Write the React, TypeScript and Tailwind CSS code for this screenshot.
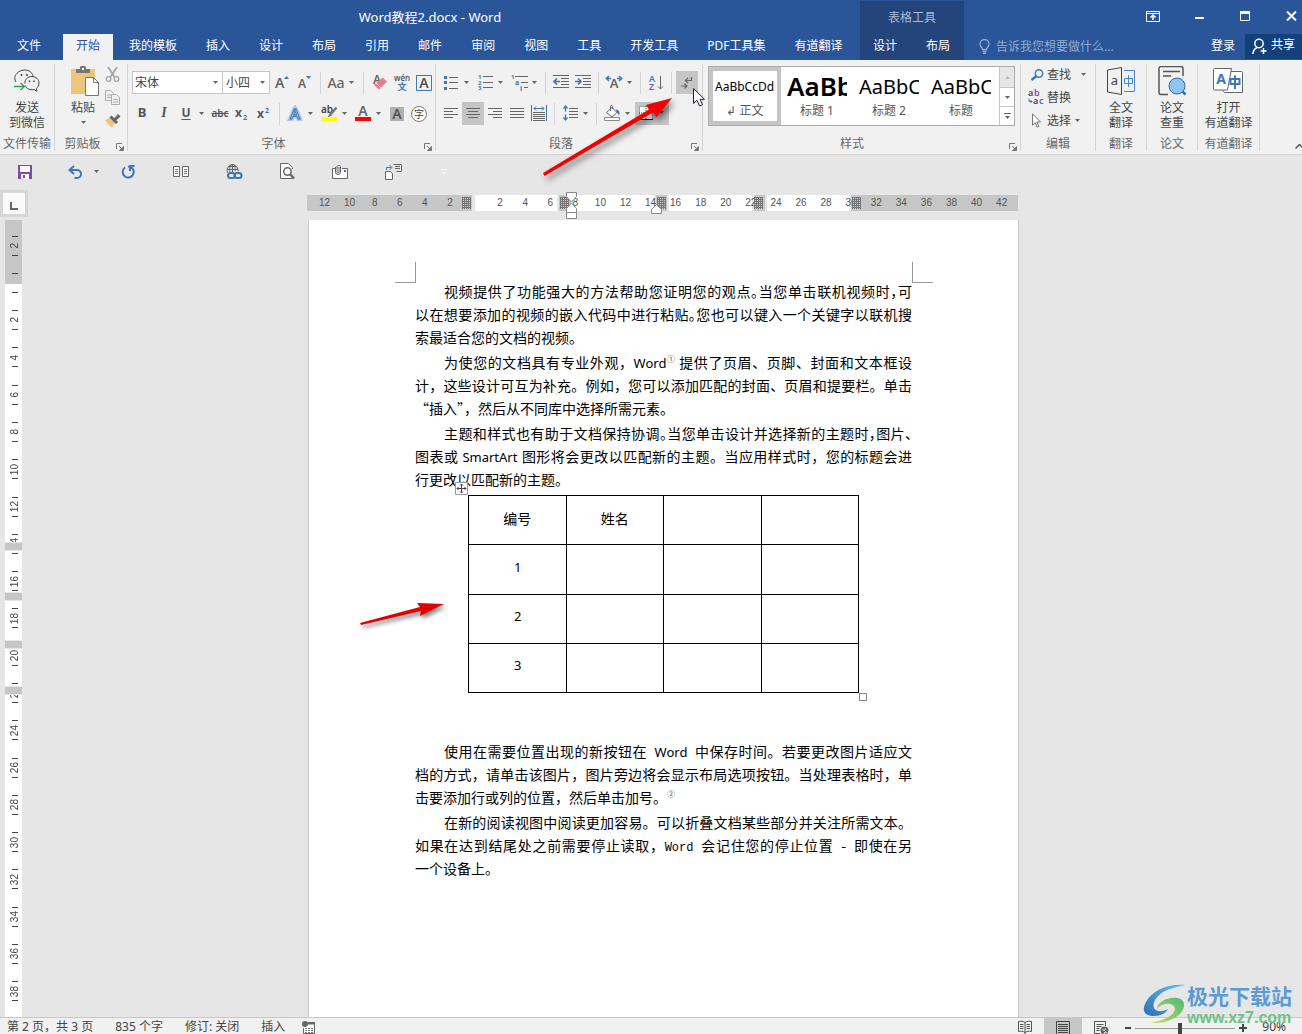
import React from "react";

type Kids = { children?: React.ReactNode };

function Svg({ w, h, className = "", children }: { w: number; h: number; className?: string } & Kids) {
  return (
    <svg width={w} height={h} viewBox={`0 0 ${w} ${h}`} className={`block shrink-0 ${className}`} fill="none" aria-hidden="true">
      {children}
    </svg>
  );
}

function Btn({ label, className = "", children }: { label: string; className?: string } & Kids) {
  return (
    <button type="button" aria-label={label} className={`flex h-[23px] w-[22px] shrink-0 items-center justify-center ${className}`}>
      {children}
    </button>
  );
}

function CaretShape() {
  return (
    <Svg w={5} h={3}>
      <path d="M0 0h5L2.5 3z" fill="#666" />
    </Svg>
  );
}

function Caret({ label }: { label: string }) {
  return (
    <button type="button" aria-label={label} className="flex h-[23px] w-[12px] shrink-0 items-center pl-[2px]">
      <CaretShape />
    </button>
  );
}

function Sep({ tight = false }: { tight?: boolean }) {
  return <span className={`mr-1 h-[22px] w-px shrink-0 bg-[#d4d4d4] ${tight ? "ml-[3px]" : "ml-1"}`} />;
}

function Group({ label, className, launcher = false, children }: { label: string; className: string; launcher?: boolean } & Kids) {
  return (
    <section aria-label={label} className={`flex h-[87px] shrink-0 flex-col border-r border-[#d4d4d4] ${className}`}>
      <div className="flex-1">{children}</div>
      <div className="relative h-[15px] text-center leading-[15px] whitespace-nowrap text-[#666]">
        {label}
        {launcher && (
          <button type="button" aria-label={`${label}设置`} className="absolute right-[3px] bottom-0">
            <Svg w={8} h={8}>
              <path d="M.5 6V.5H6" stroke="#777" />
              <path d="M3 3l3 3M7.5 3.5v4h-4z" stroke="#777" fill="#777" />
            </Svg>
          </button>
        )}
      </div>
    </section>
  );
}

function BigButton({ lines, icon, caret = false }: { lines: string[]; icon: React.ReactNode; caret?: boolean }) {
  return (
    <button type="button" className="flex flex-col items-center leading-[15px] whitespace-nowrap text-[#444]">
      <span className="mb-[2px] flex h-[34px] items-center justify-center">{icon}</span>
      {lines.map((l) => (
        <span key={l}>{l}</span>
      ))}
      {caret && (
        <span className="flex h-[15px] items-center">
          <CaretShape />
        </span>
      )}
    </button>
  );
}

function Header() {
  const tabs = ["我的模板", "插入", "设计", "布局", "引用", "邮件", "审阅", "视图", "工具", "开发工具", "PDF工具集", "有道翻译"];
  return (
    <header className="flex h-[60px] bg-[#2a5699] text-white">
      <div className="flex w-[860px] shrink-0 flex-col">
        <h1 className="h-[34px] text-center text-[13px] leading-[35px]">Word教程2.docx - Word</h1>
        <nav className="flex h-[26px] gap-[3px] pl-1 whitespace-nowrap">
          <button type="button" className="mr-[6px] px-[13px] pb-[3px]">文件</button>
          <button type="button" className="bg-[#f1f1f1] px-[13px] pb-[3px] text-[#2a5699]">开始</button>
          {tabs.map((t) => (
            <button type="button" key={t} className="shrink-0 px-[13px] pb-[3px]">{t}</button>
          ))}
        </nav>
      </div>
      <div className="mt-px w-[104px] shrink-0 bg-[#24457b]">
        <div className="h-[33px] text-center leading-[33px] text-[#a9b9d3]">表格工具</div>
        <div className="flex h-[26px] gap-[3px]">
          <button type="button" className="px-[13px] pb-[3px]">设计</button>
          <button type="button" className="px-[13px] pb-[3px]">布局</button>
        </div>
      </div>
      <div className="flex flex-1 flex-col">
        <div className="flex h-[34px] items-center justify-end gap-[35px] pr-[5px] pb-[2px]">
          <button type="button" aria-label="功能区显示选项">
            <Svg w={14} h={11}>
              <path d="M.5.5h13v10H.5zM.5 2.5h13" stroke="#fff" />
              <path d="M7 9V4.500M4.500 6.500L7 4l2.500 2.500" stroke="#fff" strokeWidth="1.500" />
            </Svg>
          </button>
          <button type="button" aria-label="最小化">
            <Svg w={10} h={10}>
              <path d="M0 7h9" stroke="#fff" strokeWidth="2" />
            </Svg>
          </button>
          <button type="button" aria-label="最大化">
            <Svg w={11} h={10}>
              <path d="M.5.5h9v9h-9z" stroke="#fff" />
              <path d="M0 1.500h10" stroke="#fff" strokeWidth="3" />
            </Svg>
          </button>
          <button type="button" aria-label="关闭">
            <Svg w={11} h={10}>
              <path d="M1 .5l9 9M10 .5l-9 9" stroke="#fff" strokeWidth="2" />
            </Svg>
          </button>
        </div>
        <div className="flex h-[25px] items-stretch">
          <label className="flex flex-1 items-center gap-[6px] pl-[15px]">
            <Svg w={11} h={15}>
              <path d="M3.500 10.500C3.500 8.500 1 8 1 5a4.500 4.500 0 019 0c0 3-2.500 3.500-2.500 5.500zM3.500 12.500h4M4 14.500h3" stroke="#94a9cb" strokeWidth="1.300" />
            </Svg>
            <input type="text" aria-label="操作说明搜索" placeholder="告诉我您想要做什么..." className="w-[150px] bg-transparent outline-none placeholder:text-[#94a9cb]" />
          </label>
          <button type="button" className="mr-[10px] pb-[2px]">登录</button>
          <button type="button" className="flex w-[57px] items-center gap-1 bg-[#133f7a] pl-[7px] whitespace-nowrap">
            <Svg w={15} h={17}>
              <circle cx="7" cy="5.500" r="4.200" stroke="#fff" strokeWidth="1.500" />
              <path d="M.8 16c.4-3.500 2-5.300 4.200-6.200M11.500 10v6M8.500 13h6" stroke="#fff" strokeWidth="1.500" />
            </Svg>
            <span className="pb-1">共享</span>
          </button>
        </div>
      </div>
    </header>
  );
}

function FontGroup() {
  return (
    <Group label="字体" launcher className="w-[308px] pl-1 [&>div:last-child]:pr-5">
      <div className="mt-[7px] flex h-[23px] items-center">
        <label className="relative">
          <span className="sr-only">字体</span>
          <select className="block h-[23px] w-[91px] appearance-none border border-[#c6c6c6] bg-white pl-[2px] leading-[21px] text-[#444]">
            <option>宋体</option>
          </select>
          <span className="pointer-events-none absolute top-[10px] right-[5px]"><CaretShape /></span>
        </label>
        <label className="relative mr-px">
          <span className="sr-only">字号</span>
          <select className="block h-[23px] w-[47px] appearance-none border border-l-0 border-[#c6c6c6] bg-white pl-[3px] leading-[21px] text-[#444]">
            <option>小四</option>
          </select>
          <span className="pointer-events-none absolute top-[10px] right-[5px]"><CaretShape /></span>
        </label>
        <Btn label="增大字号">
          <Svg w={14} h={16}>
            <text x="0" y="13" fontSize="14" fontWeight="600" fill="#666">A</text>
            <path d="M9 4l2.500-3L14 4z" fill="#3d77b5" />
          </Svg>
        </Btn>
        <Btn label="减小字号" className="ml-[1px]">
          <Svg w={14} h={16}>
            <text x="0" y="13" fontSize="12" fontWeight="600" fill="#666">A</text>
            <path d="M8 1h5L10.500 4z" fill="#3d77b5" />
          </Svg>
        </Btn>
        <Sep />
        <Btn label="更改大小写" className="text-[14px] font-medium text-[#666]">Aa</Btn>
        <Caret label="更改大小写选项" />
        <Sep />
        <Btn label="清除格式" className="ml-[1px]">
          <Svg w={17} h={17}>
            <text x="1" y="10" fontSize="12" fill="#666" fontWeight="600">A</text>
            <path d="M2 11L10.500 3.500 15 7.500 7 15.500z" fill="#e87b8b" />
            <path d="M4 9l5 5" stroke="#f1f1f1" />
          </Svg>
        </Btn>
        <Btn label="拼音指南">
          <Svg w={18} h={19}>
            <text x="9" y="8" fontSize="8" fill="#444" textAnchor="middle" fontWeight="500">wén</text>
            <text x="9" y="17" fontSize="9" fontWeight="700" fill="#3d77b5" textAnchor="middle">文</text>
          </Svg>
        </Btn>
        <Btn label="字符边框">
          <Svg w={16} h={16}>
            <path d="M.5.5h15v15H.5z" stroke="#3d77b5" />
            <text x="8" y="13" fontSize="14" fontWeight="600" fill="#555" textAnchor="middle">A</text>
          </Svg>
        </Btn>
      </div>
      <div className="mt-2 -ml-px flex h-[23px] items-center text-[#555]">
        <Btn label="加粗" className="pb-[2px] text-[13px] font-bold">B</Btn>
        <Btn label="倾斜" className="pb-[2px] font-['Liberation_Serif'] text-[14px] font-bold italic">I</Btn>
        <Btn label="下划线" className="pb-[2px] text-[12px] font-bold underline underline-offset-2">U</Btn>
        <Caret label="下划线选项" />
        <Btn label="删除线" className="pb-[1px] text-[10px] font-semibold line-through">abc</Btn>
        <Btn label="下标">
          <Svg w={14} h={14}>
            <text x="0" y="10" fontSize="12" fontWeight="700" fill="#555">x</text>
            <text x="8" y="13" fontSize="7" fontWeight="700" fill="#3d77b5">2</text>
          </Svg>
        </Btn>
        <Btn label="上标">
          <Svg w={14} h={14}>
            <text x="0" y="11" fontSize="12" fontWeight="700" fill="#555">x</text>
            <text x="8" y="6" fontSize="7" fontWeight="700" fill="#3d77b5">2</text>
          </Svg>
        </Btn>
        <Sep />
        <Btn label="文本效果">
          <Svg w={16} h={17}>
            <text x="8" y="14" fontSize="15" fontWeight="500" fill="#fff" stroke="#a9c9ea" strokeWidth="4" textAnchor="middle">A</text>
            <text x="8" y="14" fontSize="15" fontWeight="500" fill="#fff" stroke="#3d77b5" strokeWidth="1" textAnchor="middle">A</text>
          </Svg>
        </Btn>
        <Caret label="文本效果选项" />
        <Btn label="突出显示">
          <Svg w={17} h={17}>
            <text x="0" y="8" fontSize="10" fontWeight="600" fill="#444">ab</text>
            <path d="M15.500 2.500L9 10" stroke="#777" strokeWidth="2.500" />
            <path d="M8.500 8.500l2.500 2-4.500 2z" fill="#777" />
            <path d="M0 12h16v4H0z" fill="#ff0" />
          </Svg>
        </Btn>
        <Caret label="突出显示颜色" />
        <Btn label="字体颜色">
          <Svg w={16} h={17}>
            <text x="8" y="11" fontSize="14" fontWeight="600" fill="#666" textAnchor="middle">A</text>
            <path d="M0 12h16v4H0z" fill="#f00" />
          </Svg>
        </Btn>
        <Caret label="字体颜色选项" />
        <Btn label="字符底纹">
          <Svg w={14} h={14}>
            <path d="M0 0h14v14H0z" fill="#b1b1b1" />
            <text x="7" y="12" fontSize="14" fontWeight="600" fill="#555" textAnchor="middle">A</text>
          </Svg>
        </Btn>
        <Btn label="带圈字符">
          <Svg w={16} h={16}>
            <circle cx="8" cy="8" r="7.500" fill="#fff" stroke="#777" />
            <text x="8" y="11.500" fontSize="10" fill="#444" textAnchor="middle">字</text>
          </Svg>
        </Btn>
      </div>
    </Group>
  );
}

function AlignIcon({ d }: { d: string }) {
  return (
    <Svg w={14} h={12}>
      <path d={d} stroke="#666" />
    </Svg>
  );
}

function ParagraphGroup() {
  return (
    <Group label="段落" launcher className="w-[267px] pl-1 [&>div:last-child]:pr-5">
      <div className="mt-[7px] flex h-[23px] items-center">
        <Btn label="项目符号">
          <Svg w={14} h={16}>
            <path d="M5 2.500h9M5 7.500h9M5 13.500h9" stroke="#666" />
            <path d="M0 1h3v3H0zM0 6h3v3H0zM0 12h3v3H0z" fill="#3d77b5" />
          </Svg>
        </Btn>
        <Caret label="项目符号选项" />
        <Btn label="编号">
          <Svg w={15} h={17}>
            <path d="M5 2.500h10M5 8.500h10M5 13.500h10" stroke="#666" />
            <text x="0" y="5" fontSize="6" fontWeight="700" fill="#3d77b5">1</text>
            <text x="0" y="10.500" fontSize="6" fontWeight="700" fill="#3d77b5">2</text>
            <text x="0" y="16" fontSize="6" fontWeight="700" fill="#3d77b5">3</text>
          </Svg>
        </Btn>
        <Caret label="编号选项" />
        <Btn label="多级列表">
          <Svg w={17} h={17}>
            <path d="M4 2.500h13M10 8.500h7M13 13.500h4" stroke="#666" />
            <text x="0" y="5" fontSize="6" fontWeight="700" fill="#3d77b5">1</text>
            <text x="4" y="10.500" fontSize="7" fontWeight="700" fill="#3d77b5">a</text>
            <text x="9" y="16.500" fontSize="7" fontWeight="700" fill="#3d77b5">i</text>
          </Svg>
        </Btn>
        <Caret label="多级列表选项" />
        <Sep tight />
        <Btn label="减少缩进">
          <Svg w={16} h={15}>
            <path d="M0 .5h16M8 3.500h8M8 6.500h8M8 9.500h8M0 12.500h16" stroke="#666" />
            <path d="M7 6.500H1M4 3.500L1 6.500l3 3" stroke="#3d77b5" strokeWidth="1.700" />
          </Svg>
        </Btn>
        <Btn label="增加缩进">
          <Svg w={16} h={15}>
            <path d="M0 .5h16M8 3.500h8M8 6.500h8M8 9.500h8M0 12.500h16" stroke="#666" />
            <path d="M0 6.500h6M3 3.500l3 3-3 3" stroke="#3d77b5" strokeWidth="1.700" />
          </Svg>
        </Btn>
        <Sep />
        <Btn label="中文版式">
          <Svg w={18} h={15}>
            <text x="9" y="13" fontSize="13" fontWeight="600" fill="#666" textAnchor="middle">A</text>
            <path d="M6 3.500H1.500M4 1L1.300 3.500 4 6M12 3.500h4.500M14 1l2.700 2.500L14 6" stroke="#3d77b5" strokeWidth="1.500" />
          </Svg>
        </Btn>
        <Caret label="中文版式选项" />
        <Sep tight />
        <Btn label="排序">
          <Svg w={15} h={18}>
            <text x="0" y="8" fontSize="9" fontWeight="600" fill="#3d77b5">A</text>
            <text x="0" y="16" fontSize="9" fontWeight="600" fill="#8a4aa8">Z</text>
            <path d="M11.500 2v13M9 12.500l2.500 2.500 2.500-2.500" stroke="#666" />
          </Svg>
        </Btn>
        <Sep />
        <Btn label="显示编辑标记" className="bg-[#c5c5c5]">
          <Svg w={12} h={14}>
            <path d="M10.500 1v3.500H5M7 2L4.500 4.500 7 7" stroke="#666" strokeWidth="1.200" />
            <path d="M0 10h5.500M3.500 7.500L6 10l-2.500 2.500" stroke="#666" strokeWidth="1.200" />
          </Svg>
        </Btn>
      </div>
      <div className="mt-2 flex h-[23px] items-center">
        <Btn label="左对齐"><AlignIcon d="M0 .5h14M0 3.500h9M0 6.500h14M0 9.500h9" /></Btn>
        <Btn label="居中" className="bg-[#c5c5c5]"><AlignIcon d="M0 .5h14M2 3.500h10M0 6.500h14M2 9.500h10" /></Btn>
        <Btn label="右对齐"><AlignIcon d="M0 .5h14M5 3.500h9M0 6.500h14M5 9.500h9" /></Btn>
        <Btn label="两端对齐"><AlignIcon d="M0 .5h14M0 3.500h14M0 6.500h14M0 9.500h14" /></Btn>
        <Btn label="分散对齐">
          <Svg w={16} h={18}>
            <path d="M.5 0v16M15.500 0v16M3 3.500h10M5 1.500L3 3.500l2 2M11 1.500l2 2-2 2" stroke="#3d77b5" />
            <path d="M2 7.500h12M2 9.500h12M2 11.500h12M2 13.500h12M2 15.500h12" stroke="#666" />
          </Svg>
        </Btn>
        <Sep />
        <Btn label="行距">
          <Svg w={15} h={18}>
            <path d="M2.500 1v5.500M.5 3.500l2-2.500 2 2.500M2.500 9.500V15M.5 12.500l2 2.500 2-2.500" stroke="#3d77b5" strokeWidth="1.300" />
            <path d="M6 3.500h9M6 6.500h9M6 9.500h9M6 12.500h9" stroke="#666" />
          </Svg>
        </Btn>
        <Caret label="行距选项" />
        <Sep tight />
        <Btn label="底纹">
          <Svg w={17} h={17}>
            <path d="M2.500 7.500L8 2.500l5 5-5 4.500z" fill="#fff" stroke="#666" />
            <path d="M6.500 6V1.500a1 1 0 012 0V4" stroke="#666" />
            <path d="M12 4.500c3 .5 4.500 2.500 3 6.500-.5-2-1-3-2.500-3.500z" fill="#3d77b5" />
            <path d="M.5 12.500h15v3H.5z" fill="#fff" stroke="#888" />
          </Svg>
        </Btn>
        <Caret label="底纹颜色" />
        <button type="button" aria-label="边框" className="flex h-[23px] w-[34px] items-center gap-[6px] bg-[#c5c5c5] pb-[2px] pl-1">
          <Svg w={14} h={14}>
            <path d="M0 0h14v14H0z" fill="#fff" />
            <path d="M.5.5h13v13H.5zM7 0v14M0 7h14" stroke="#444" strokeDasharray="1 1" />
            <path d="M0 13.500h14" stroke="#222" />
          </Svg>
          <CaretShape />
        </button>
      </div>
    </Group>
  );
}

function StyleCell({ sample, size, name, active = false }: { sample: string; size: string; name: string; active?: boolean }) {
  return (
    <button
      type="button"
      className={`flex h-[58px] w-[72px] flex-col items-center overflow-hidden whitespace-nowrap ${active ? "border-4 border-[#c5c5c5]" : "p-1"}`}
    >
      <span className={`block h-[31px] w-[60px] shrink-0 overflow-hidden text-left leading-[31px] text-black ${size}`}>{sample}</span>
      <span className="leading-[17px] text-[#555]">{name}</span>
    </button>
  );
}

function StylesGroup() {
  return (
    <Group label="样式" launcher className="w-[318px] pl-[5px] [&>div:last-child]:pr-6">
      <div className="mt-[2px] flex h-[60px] w-[307px] border border-[#ababab] bg-white">
        <StyleCell active sample="AaBbCcDd" size="text-[12px]" name="↲ 正文" />
        <StyleCell sample="AaBb" size="text-[26px] font-semibold" name="标题 1" />
        <StyleCell sample="AaBbC" size="text-[20px]" name="标题 2" />
        <StyleCell sample="AaBbC" size="text-[20px]" name="标题" />
        <div className="ml-auto flex w-[15px] flex-col border-l border-[#c6c6c6]">
          <button type="button" aria-label="上一行" className="flex h-[20px] items-center justify-center bg-[#e6e6e6]">
            <Svg w={5} h={3}><path d="M0 3h5L2.500 0z" fill="#bbb" /></Svg>
          </button>
          <button type="button" aria-label="下一行" className="flex h-[20px] items-center justify-center border-y border-[#c6c6c6]"><CaretShape /></button>
          <button type="button" aria-label="其他样式" className="flex flex-1 items-center justify-center">
            <Svg w={7} h={6}><path d="M0 .5h7" stroke="#666" /><path d="M1 3h5L3.500 6z" fill="#666" /></Svg>
          </button>
        </div>
      </div>
    </Group>
  );
}

function EditRow({ icon, text, caret }: { icon: React.ReactNode; text: string; caret?: "near" | "far" }) {
  return (
    <button type="button" className="flex h-[23px] w-full items-center text-[#444]">
      <span className="flex w-[19px] justify-center">{icon}</span>
      <span>{text}</span>
      {caret && <span className={caret === "far" ? "ml-[10px]" : "ml-1"}><CaretShape /></span>}
    </button>
  );
}

function Ribbon() {
  return (
    <div className="flex h-[95px] border-b border-[#d4d4d4] bg-[#f1f1f1] pt-1">
      <Group label="文件传输" className="w-[55px]">
        <div className="flex justify-center">
          <BigButton
            lines={["发送", "到微信"]}
            icon={
              <Svg w={26} h={24}>
                <path d="M2 13C.3 10.500.2 7 3 4.300 7-.3 16-.3 18.500 5.500c.3.700.5 1.500.5 2.300M10 14" stroke="#444" />
                <path d="M11 14.500c-.5-4 2.500-7 7-7 4 0 7 2.800 7 6.500 0 2.500-1.200 4.300-2.500 5.300l.5 3-3-1.800c-4 .8-7.500-.5-8.700-4" stroke="#444" />
                <path d="M7.500 5v2M13 5v2M15.500 11.500v1.500M20 11.500v1.500" stroke="#444" strokeWidth="1.500" />
                <path d="M0 17.500h10M6.500 14l4 3.500-4 3.500" stroke="#3a9a5c" strokeWidth="1.300" />
              </Svg>
            }
          />
        </div>
      </Group>
      <Group label="剪贴板" launcher className="w-[73px] [&>div:last-child]:pr-[17px]">
        <div className="flex pl-3">
          <BigButton
            caret
            lines={["粘贴"]}
            icon={
              <Svg w={28} h={30} className="ml-1">
                <path d="M0 3h24v25H0z" fill="#edc67c" />
                <path d="M5 7V3h4V1.500C9 .7 9.700 0 10.500 0h3c.8 0 1.500.7 1.500 1.500V3h4v4z" fill="#777" />
                <path d="M11 2h2v2h-2z" fill="#fff" />
                <path d="M14.500 11.500h8l5 5v13h-13z" fill="#fff" stroke="#777" />
                <path d="M22.500 11.500v5h5" stroke="#777" />
              </Svg>
            }
          />
          <div className="ml-[6px] flex w-4 flex-col gap-2 pt-[3px]">
            <button type="button" aria-label="剪切">
              <Svg w={15} h={15}>
                <path d="M3 0l6.500 10M12 0L5.500 10" stroke="#a5a5a5" strokeWidth="1.800" />
                <circle cx="3.500" cy="12" r="2.300" stroke="#a5a5a5" strokeWidth="1.300" />
                <circle cx="11.500" cy="12" r="2.300" stroke="#a5a5a5" strokeWidth="1.300" />
              </Svg>
            </button>
            <button type="button" aria-label="复制">
              <Svg w={16} h={15}>
                <path d="M.5.5h5l3 3v7h-8zM2 5h4M2 7.500h4" stroke="#b3a9b3" />
                <path d="M6.500 4.500h5l3 3v7h-8z" fill="#f1f1f1" stroke="#b3a9b3" />
                <path d="M8 9.500h5M8 12h5" stroke="#b3a9b3" />
              </Svg>
            </button>
            <button type="button" aria-label="格式刷">
              <Svg w={16} h={15}>
                <path d="M0 7l5-2 5 5-3 5C5 13 2 10 0 7z" fill="#edc67c" />
                <path d="M5.500 3.500l6.500 6.500" stroke="#666" strokeWidth="3" />
                <path d="M9 6l4-4.500 2 2L10.500 7.500z" fill="#666" stroke="#666" />
              </Svg>
            </button>
          </div>
        </div>
      </Group>
      <FontGroup />
      <ParagraphGroup />
      <StylesGroup />
      <Group label="编辑" className="w-[75px]">
        <div className="-mt-px pl-[7px]">
          <EditRow
            text="查找"
            caret="far"
            icon={
              <Svg w={16} h={12}>
                <circle cx="9" cy="4.500" r="3.700" stroke="#3d77b5" strokeWidth="1.500" />
                <path d="M6.500 7L1.500 11" stroke="#3d77b5" strokeWidth="2.500" />
              </Svg>
            }
          />
          <EditRow
            text="替换"
            icon={
              <Svg w={19} h={17}>
                <text x="0" y="7" fontSize="9" fontWeight="600" fill="#444">a</text>
                <text x="6" y="7" fontSize="9" fontWeight="600" fill="#8a4aa8">b</text>
                <text x="5" y="15" fontSize="9" fontWeight="600" fill="#444">a</text>
                <text x="11" y="15" fontSize="9" fontWeight="600" fill="#3d77b5">c</text>
                <path d="M1 9.500v3h3M2.500 11l1.500 1.500L2.500 14" stroke="#3d77b5" />
              </Svg>
            }
          />
          <EditRow
            text="选择"
            caret="near"
            icon={
              <Svg w={12} h={15}>
                <path d="M.5.8v11.400l2.700-2.500 2 4.500 1.700-.8-2-4.400h3.600z" fill="#fff" stroke="#777" />
              </Svg>
            }
          />
        </div>
      </Group>
      <Group label="翻译" className="w-[51px]">
        <div className="flex justify-center">
          <BigButton
            lines={["全文", "翻译"]}
            icon={
              <Svg w={28} h={28}>
                <path d="M.5 3l14-2.500v27L.5 25z" stroke="#444" />
                <text x="7.500" y="18" fontSize="13" fill="#444" textAnchor="middle">a</text>
                <path d="M17 3.500h10.500v21H17" stroke="#4a86d0" />
                <path d="M17.500 11.500h8v5h-8zM21.500 8v12" stroke="#4a86d0" />
              </Svg>
            }
          />
        </div>
      </Group>
      <Group label="论文" className="w-[51px]">
        <div className="flex justify-center">
          <BigButton
            lines={["论文", "查重"]}
            icon={
              <Svg w={28} h={30}>
                <path d="M10 28.500H3A2 2 0 011 26.500v-24a2 2 0 012-2h20a2 2 0 012 2V10" stroke="#555" strokeWidth="1.500" />
                <path d="M5 5.500h17M5 10h8" stroke="#555" strokeWidth="1.700" />
                <path d="M23 24l4.500 4.500" stroke="#2f6f9f" strokeWidth="2.500" />
                <circle cx="19" cy="20" r="8" fill="#90c4f7" stroke="#2f6f9f" />
              </Svg>
            }
          />
        </div>
      </Group>
      <Group label="有道翻译" className="w-[62px]">
        <div className="flex justify-center">
          <BigButton
            lines={["打开", "有道翻译"]}
            icon={
              <Svg w={30} h={26}>
                <path d="M14 3.500h14.500a1 1 0 011 1v20H11.500L9.500 22" fill="#fff" stroke="#666" />
                <path d="M.5 1.500a1 1 0 011-1h17l-4 21.500H1.500a1 1 0 01-1-1z" fill="#fff" stroke="#666" />
                <path d="M17.500 11h9v5h-9zM22 7.500V21" stroke="#3d77b5" strokeWidth="2" />
                <text x="8" y="16" fontSize="14" fontWeight="700" fill="#3d77b5" textAnchor="middle">A</text>
              </Svg>
            }
          />
        </div>
      </Group>
      <button type="button" aria-label="折叠功能区" className="mt-auto ml-auto pb-[5px]">
        <Svg w={7} h={5}><path d="M.5 4.500l4-4 4 4" stroke="#555" strokeWidth="1.500" /></Svg>
      </button>
    </div>
  );
}

function QuickAccess() {
  return (
    <div className="flex h-[35px] shrink-0 items-center pb-[2px] pl-[14px]">
      <Btn label="保存" className="mr-7">
        <Svg w={14} h={14}>
          <path d="M0 0h14v14H0z" fill="#8648a8" />
          <path d="M2 1h10v6H2zM3 9h8v5H3z" fill="#fff" />
          <path d="M5 10h2v3H5z" fill="#8648a8" />
        </Svg>
      </Btn>
      <Btn label="撤消">
        <Svg w={15} h={14}>
          <path d="M1.500 5H9a4 4 0 010 8H6.500" stroke="#3d77b5" strokeWidth="2" />
          <path d="M6 1L1.500 5 6 9" stroke="#3d77b5" strokeWidth="2" />
        </Svg>
      </Btn>
      <Btn label="撤消列表" className="-mr-[7px] -ml-px"><CaretShape /></Btn>
      <Btn label="重复" className="mr-[31px] ml-[17px]">
        <Svg w={15} h={14}>
          <path d="M4.500 2.500A5.500 5.500 0 107.500 1.500" stroke="#3d77b5" strokeWidth="2" transform="translate(-.5 0)" />
          <path d="M8.500 1h5M9 1v5" stroke="#3d77b5" strokeWidth="2" />
        </Svg>
      </Btn>
      <Btn label="双页" className="mr-[31px]">
        <Svg w={16} h={12}>
          <path d="M.5.5h6v10h-6zM9.500.5h6v10h-6z" fill="#fff" stroke="#666" />
          <path d="M2 3.500h3M2 5.500h3M2 7.500h3M11 3.500h3M11 5.500h3M11 7.500h3" stroke="#777" />
        </Svg>
      </Btn>
      <Btn label="超链接" className="mr-[31px]">
        <Svg w={17} h={17}>
          <path d="M1.500 9.500A5.500 5.500 0 1112 6.500v2M1 6.500h11M2 3.500h9M6.500 1v8M4 9C3.300 6 3.500 3 5.500 1M9 8c.5-3 0-5-1.500-7" stroke="#666" />
          <rect x="2" y="10" width="7" height="5" rx="2.500" stroke="#3d77b5" strokeWidth="2" />
          <rect x="8.500" y="10" width="7" height="5" rx="2.500" stroke="#3d77b5" strokeWidth="2" />
        </Svg>
      </Btn>
      <Btn label="打印预览" className="mr-[31px]">
        <Svg w={15} h={17}>
          <path d="M12.500 14v1.500H.5V.5h8l4 4V6" fill="#fff" stroke="#666" />
          <circle cx="7.500" cy="8.500" r="3.700" fill="#fff" stroke="#666" strokeWidth="1.500" />
          <path d="M10 11l4 4.500" stroke="#666" strokeWidth="2.500" />
        </Svg>
      </Btn>
      <Btn label="附件" className="mr-[31px]">
        <Svg w={17} h={16}>
          <path d="M3 4.500H.5v10h15v-10H10" fill="#fff" stroke="#666" />
          <path d="M12 6h2v2h-2z" fill="#3d77b5" />
          <path d="M3.500 3v5a2.500 2.500 0 005 0V2.500a2 2 0 00-3.500 0V8a1 1 0 002 0V3" stroke="#666" />
        </Svg>
      </Btn>
      <Btn label="发送文档" className="mr-[37px]">
        <Svg w={17} h={17}>
          <path d="M.5 8.500h5l2 2v6h-7z" fill="#fff" stroke="#666" />
          <path d="M8.500 1.500h8v7h-5M10 3.500h5M10 5.500h5" stroke="#666" />
          <path d="M1.500 7V4.500h5M4.500 2l2.500 2.500L4.500 7" stroke="#3d77b5" />
        </Svg>
      </Btn>
      <button type="button" aria-label="自定义快速访问工具栏">
        <Svg w={6} h={6}><path d="M0 .5h6" stroke="#fafafa" /><path d="M.5 3h5L3 5.500z" fill="#fafafa" /></Svg>
      </button>
    </div>
  );
}

function GridMarker({ className }: { className: string }) {
  return (
    <Svg w={9} h={12} className={`absolute top-[2px] ${className}`}>
      <path d="M0 0h9v12H0z" fill="#c6c6c6" />
      <path d="M.5 0v12M2.500 0v12M4.500 0v12M6.500 0v12M8.500 0v12M0 .5h9M0 2.500h9M0 4.500h9M0 6.500h9M0 8.500h9M0 10.500h9" stroke="#777" />
    </Svg>
  );
}

function HorizontalRuler() {
  const marks = ["12", "10", "8", "6", "4", "2", "", ...Array.from({ length: 21 }, (_, i) => String((i + 1) * 2))];
  return (
    <div className="relative h-4 w-[711px] shrink-0 text-[10px] text-[#555]">
      <div className="absolute inset-0 flex">
        <i className="w-[165px] bg-[#c6c6c6]" />
        <i className="mr-[2px] ml-[3px] w-[82px] bg-white" />
        <i className="mr-[2px] w-[12px] bg-[#c6c6c6]" />
        <i className="mr-[2px] w-[81px] bg-white" />
        <i className="mr-[2px] w-[11px] bg-[#c6c6c6]" />
        <i className="mr-[2px] w-[83px] bg-white" />
        <i className="mr-[2px] w-[11px] bg-[#c6c6c6]" />
        <i className="mr-[2px] w-[82px] bg-white" />
        <i className="flex-1 bg-[#c6c6c6]" />
      </div>
      <div className="relative flex pr-1 pl-[5px] font-['Liberation_Sans'] leading-[16px]">
        {marks.map((m, i) => (
          <span key={i} className="min-w-0 flex-1 text-center">{m}</span>
        ))}
      </div>
      <GridMarker className="left-[155px]" />
      <GridMarker className="left-[253px]" />
      <GridMarker className="left-[350px]" />
      <GridMarker className="left-[447px]" />
      <GridMarker className="left-[545px]" />
      <Svg w={11} h={28} className="absolute -top-[3px] left-[259px]">
        <path d="M.5.500h10v4L5.500 10 .5 4.500z" fill="#fff" stroke="#888" />
        <path d="M.5 20.500v-4L5.500 11l5 5.500v4z" fill="#fff" stroke="#888" />
        <path d="M.5 20.500h10v6H.5z" fill="#fff" stroke="#888" />
      </Svg>
      <Svg w={11} h={10} className="absolute top-[9px] left-[344px]">
        <path d="M.5 9.500v-4L5.500.5l5 5v4z" fill="#fff" stroke="#888" />
      </Svg>
    </div>
  );
}

function VerticalRuler() {
  const marks = ["2", "", ...Array.from({ length: 19 }, (_, i) => String((i + 1) * 2))];
  return (
    <div className="relative ml-[5px] w-[17px] shrink-0 overflow-hidden bg-white">
      <div className="absolute inset-x-0 top-0 h-16 bg-[#c6c6c6]" />
      <div className="relative mt-[7px] flex h-[783px] flex-col font-['Liberation_Sans'] text-[10px] text-[#444]">
        {marks.map((m, i) => (
          <div key={i} className="flex min-h-0 flex-1 flex-col items-center justify-center pl-[3px]">
            <i className="h-px w-[6px] bg-[#444]" />
            <span className="flex h-[18px] w-[12px] items-center justify-center leading-none [writing-mode:vertical-rl]">
              <span className="rotate-180">{m}</span>
            </span>
            <i className="h-px w-[6px] bg-[#444]" />
          </div>
        ))}
      </div>
      <div className="absolute inset-x-0 top-[322px] h-[9px] border-y border-[#e6e6e6] bg-[#c6c6c6]" />
      <div className="absolute inset-x-0 top-[372px] h-[9px] border-y border-[#e6e6e6] bg-[#c6c6c6]" />
      <div className="absolute inset-x-0 top-[420px] h-[9px] border-y border-[#e6e6e6] bg-[#c6c6c6]" />
      <div className="absolute inset-x-0 top-[466px] h-[9px] border-y border-[#e6e6e6] bg-[#c6c6c6]" />
    </div>
  );
}

/* One typeset line: "full" spreads it over the measure, "tight" sets half-width punctuation. */
function Line({ full = false, indent = false, tight = false, children }: { full?: boolean; indent?: boolean; tight?: boolean } & Kids) {
  return (
    <span
      className={`block h-[23px] whitespace-nowrap ${full ? "[text-align-last:justify]" : ""} ${indent ? "pl-[29px]" : ""} ${
        tight ? "[font-feature-settings:'halt']" : ""
      }`}
    >
      {children}
    </span>
  );
}

function NoteMark({ children }: Kids) {
  return <sup className="relative -top-[6px] align-baseline text-[8px] leading-none text-[#555]">{children}</sup>;
}

function Latin({ children }: Kids) {
  return <span className="mx-1 font-['Noto_Sans'] text-[13px] leading-none">{children}</span>;
}

function DocTable() {
  const rows = [["编号", "姓名"], ["1", ""], ["2", ""], ["3", ""]];
  return (
    <div className="relative mx-[53px] mt-1">
      <table className="h-[198px] w-full table-fixed border-collapse text-center font-['Noto_Sans','Noto_Sans_CJK_SC',sans-serif]">
        <tbody>
          {rows.map((r, i) => (
            <tr key={i}>
              {[0, 1, 2, 3].map((c) => (
                <td key={c} className={`h-[49px] border border-black p-0 pb-1 ${i > 0 ? "pl-px text-[13px]" : ""}`}>{r[c] ?? ""}</td>
              ))}
            </tr>
          ))}
        </tbody>
      </table>
      <Svg w={13} h={13} className="absolute -top-[13px] -left-[13px]">
        <path d="M.5.5h12v12H.5z" fill="#fff" stroke="#999" />
        <path d="M6.500 2v9M2 6.500h9M5 3.500L6.500 2 8 3.500M5 9.500L6.500 11 8 9.500M3.500 5L2 6.500 3.500 8M9.500 5L11 6.500 9.500 8" stroke="#444" />
      </Svg>
      <i className="absolute -right-[8px] -bottom-[8px] h-[8px] w-[8px] border border-[#888] bg-white" />
    </div>
  );
}

function Page() {
  return (
    <main className="w-[711px] shrink-0 border-x border-[#c6c6c6] bg-white pt-[42px] text-[14px] leading-[23px] text-black">
      <div className="flex h-[18px] justify-between pr-[85px] pl-[86px]">
        <i className="h-[21px] w-[21px] border-r border-b border-[#999]" />
        <i className="h-[21px] w-[21px] border-b border-l border-[#999]" />
      </div>
      <article className="px-[106px] font-['Noto_Sans_CJK_SC',sans-serif]">
        <div className="flex flex-col gap-[2px]">
          <p>
            <Line full indent tight>视频提供了功能强大的方法帮助您证明您的观点。当您单击联机视频时，可</Line>
            <Line full tight>以在想要添加的视频的嵌入代码中进行粘贴。您也可以键入一个关键字以联机搜</Line>
            <Line>索最适合您的文档的视频。</Line>
          </p>
          <p>
            <Line full indent>为使您的文档具有专业外观，<span className="font-['Noto_Sans'] text-[13px] leading-none">Word</span><NoteMark>①</NoteMark> 提供了页眉、页脚、封面和文本框设</Line>
            <Line full>计，这些设计可互为补充。例如，您可以添加匹配的封面、页眉和提要栏。单击</Line>
            <Line>“插入”，然后从不同库中选择所需元素。</Line>
          </p>
          <p>
            <Line full indent tight>主题和样式也有助于文档保持协调。当您单击设计并选择新的主题时，图片、</Line>
            <Line full>图表或<Latin>SmartArt</Latin>图形将会更改以匹配新的主题。当应用样式时，您的标题会进</Line>
            <Line>行更改以匹配新的主题。</Line>
          </p>
        </div>
        <DocTable />
        <div className="mt-[47px] flex flex-col gap-[2px]">
          <p>
            <Line full indent>使用在需要位置出现的新按钮在 <Latin>Word</Latin> 中保存时间。若要更改图片适应文</Line>
            <Line full>档的方式，请单击该图片，图片旁边将会显示布局选项按钮。当处理表格时，单</Line>
            <Line>击要添加行或列的位置，然后单击加号。<NoteMark>②</NoteMark></Line>
          </p>
          <p>
            <Line full indent>在新的阅读视图中阅读更加容易。可以折叠文档某些部分并关注所需文本。</Line>
            <Line full>如果在达到结尾处之前需要停止读取，<span className="mr-1 font-['Liberation_Mono'] text-[12px] leading-none">Word</span> 会记住您的停止位置 <span className="mx-1">-</span> 即使在另</Line>
            <Line>一个设备上。</Line>
          </p>
        </div>
      </article>
    </main>
  );
}

function StatusBar() {
  return (
    <footer className="flex h-[17px] shrink-0 items-start overflow-hidden border-t border-[#c6c6c6] bg-[#f1f1f1] pl-[7px] leading-[18px] whitespace-nowrap text-[#444]">
      <span>第 2 页，共 3 页</span>
      <span className="ml-[22px]">835 个字</span>
      <span className="ml-[22px]">修订: 关闭</span>
      <span className="ml-[22px]">插入</span>
      <button type="button" aria-label="宏录制" className="mt-[3px] ml-[17px]">
        <Svg w={14} h={14}>
          <path d="M5.500 1.500h7v11h-11V7" stroke="#666" fill="#fff" />
          <path d="M6 2.500h7" stroke="#666" strokeWidth="2" />
          <circle cx="3" cy="3" r="3" fill="#666" />
          <path d="M3 7.500h8M3 9.500h8M3 11.500h8" stroke="#777" strokeDasharray="2 1" />
        </Svg>
      </button>
      <div className="ml-auto flex items-start">
        <button type="button" aria-label="阅读视图" className="mt-[2px] mr-[12px]">
          <Svg w={14} h={14}>
            <path d="M7 2.500C5 1 3 1 .5 1.500v10C3 11 5 11 7 12.500c2-1.500 4-1.500 6.500-1v-10C11 1 9 1 7 2.500zM7 2v12" stroke="#555" />
            <path d="M2 4.500h3.500M2 6.500h3.500M2 8.500h3.500M8.500 4.500H12M8.500 6.500H12M8.500 8.500H12" stroke="#555" />
          </Svg>
        </button>
        <button type="button" aria-label="页面视图" className="flex h-[18px] w-[38px] justify-center bg-[#c6c6c6] pt-[3px]">
          <Svg w={14} h={14}>
            <path d="M.5.5h13v13H.5z" stroke="#444" />
            <path d="M2 3.500h10M2 5.500h10M2 7.500h10M2 9.500h10M2 11.500h10" stroke="#444" />
          </Svg>
        </button>
        <button type="button" aria-label="Web 版式视图" className="mt-[3px] mr-4 ml-3">
          <Svg w={15} h={14}>
            <path d="M6 12.500H.5V.5h11V5M2.500 3.500h7M2.500 5.500h5M2.500 7.500h3M2.500 9.500h3" stroke="#555" />
            <circle cx="10.500" cy="9.500" r="4" fill="#666" />
            <path d="M8.500 8.500l2 1 1-2M10 13l1-2 2 .5" stroke="#f1f1f1" />
          </Svg>
        </button>
        <button type="button" aria-label="缩小" className="mr-1 h-[20px]"><Svg w={6} h={2}><path d="M0 0h6v2H0z" fill="#444" /></Svg></button>
        <input
          type="range"
          min={0}
          max={100}
          defaultValue={45}
          aria-label="显示比例"
          className="mt-1 h-3 w-[100px] appearance-none bg-[linear-gradient(#999,#999)] bg-[length:100%_1px] bg-center bg-no-repeat [&::-webkit-slider-thumb]:h-[11px] [&::-webkit-slider-thumb]:w-1 [&::-webkit-slider-thumb]:appearance-none [&::-webkit-slider-thumb]:bg-[#444]"
        />
        <button type="button" aria-label="放大" className="mt-[6px] ml-1"><Svg w={8} h={8}><path d="M0 4h8M4 0v8" stroke="#444" strokeWidth="2" /></Svg></button>
        <span className="mr-4 ml-[15px]">90%</span>
      </div>
    </footer>
  );
}

function Watermark() {
  return (
    <div className="pointer-events-none absolute right-[10px] bottom-[7px] flex items-end gap-px">
      <Svg w={43} h={42} className="mb-[2px]">
        <defs>
          <linearGradient id="wm-blue" x1="0" y1="1" x2="1" y2="0">
            <stop offset="0" stopColor="#2f6fb5" />
            <stop offset="1" stopColor="#5fc0ee" />
          </linearGradient>
          <linearGradient id="wm-green" x1="1" y1="0" x2="0" y2="1">
            <stop offset="0" stopColor="#4cb87c" />
            <stop offset="1" stopColor="#c9dd4f" />
          </linearGradient>
        </defs>
        <path d="M43 2C26 0 9 7 3 19c-5 9-1 14 8 14 7 0 12-3 14-7-5 3-12 3-14-1-2-5 2-11 9-16C28 5 36 3 43 2z" fill="url(#wm-blue)" />
        <path d="M24 16c9-3 18-1 17 7-1 9-14 18-34 17 13-2 24-7 25-14 0-4-5-6-10-5-4 1-7 3-8 5 0-4 4-8 10-10z" fill="url(#wm-green)" />
      </Svg>
      <div className="flex flex-col font-['Liberation_Sans','Noto_Sans_CJK_SC',sans-serif]">
        <span className="text-[21px] leading-[24px] font-bold text-[#5b9bd5]">极光下载站</span>
        <span className="text-[16px] leading-[18px] font-bold text-[#6cc287]">www.xz7.com</span>
      </div>
    </div>
  );
}

function Overlays() {
  return (
    <>
      <Svg w={150} h={100} className="pointer-events-none absolute top-[90px] left-[536px] drop-shadow-[3px_4px_3px_rgba(0,0,0,0.5)]">
        <path d="M136 8L110 15l3 4.500L7 83l1.500 3L117 22.500l3.500 4.500z" fill="#f40000" />
      </Svg>
      <Svg w={100} h={40} className="pointer-events-none absolute top-[594px] left-[352px] drop-shadow-[2px_3px_2px_rgba(0,0,0,0.5)]">
        <path d="M92 10L65 9l3 4L8 29l1 2 60-14-1 5z" fill="#e00000" />
      </Svg>
      <Svg w={14} h={20} className="pointer-events-none absolute top-[87px] left-[692px]">
        <path d="M1.500 1.500v15l3.500-3.200 2.500 5.700 3-1.300L8 12.300h4.500z" fill="#fff" stroke="#223" />
      </Svg>
    </>
  );
}

export default function App() {
  return (
    <div className="relative flex h-screen min-w-[1302px] flex-col overflow-hidden bg-[#e6e6e6] font-['Noto_Sans','Noto_Sans_CJK_SC',sans-serif] text-[12px]">
      <Header />
      <Ribbon />
      <QuickAccess />
      <div className="flex h-[30px] shrink-0">
        <div className="-mr-[5px] flex h-[27px] w-[28px] shrink-0 items-center justify-center border-[3px] border-[#d6d6d6] bg-[#fafafa]">
          <Svg w={8} h={8} className="mt-1"><path d="M1 0v7h7" stroke="#666" strokeWidth="2" /></Svg>
        </div>
        <div className="flex flex-1 justify-center pt-[5px]"><HorizontalRuler /></div>
      </div>
      <div className="flex min-h-0 flex-1 overflow-hidden">
        <VerticalRuler />
        <div className="ml-[3px] flex flex-1 justify-center"><Page /></div>
      </div>
      <StatusBar />
      <Watermark />
      <Overlays />
    </div>
  );
}
